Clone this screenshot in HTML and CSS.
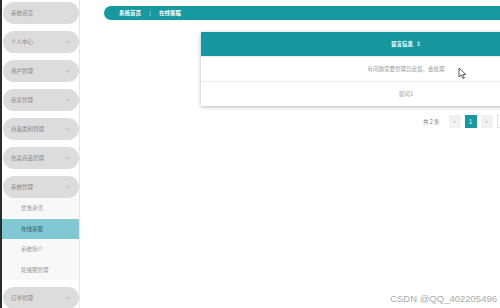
FILE: index.html
```html
<!DOCTYPE html>
<html lang="zh">
<head>
    <meta charset="UTF-8">
    <title>在线客服</title>
    <link rel="stylesheet" href="styles.css">
</head>
<body>
    <div class="pagina">
        <div class="menu">
            <div class="item">系统首页</div>
            <div class="item">个人中心<span class="seta"></span></div>
            <div class="item">用户管理<span class="seta"></span></div>
            <div class="item">商家管理<span class="seta"></span></div>
            <div class="item">商品类别管理<span class="seta"></span></div>
            <div class="item">热卖商品管理<span class="seta"></span></div>
            <div class="item aberto">系统管理<span class="seta cima"></span></div>
            <div class="submenu">
                <div class="subitem">优惠资讯</div>
                <div class="subitem ativo">在线客服</div>
                <div class="subitem">系统简介</div>
                <div class="subitem">轮播图管理</div>
            </div>
            <div class="item">订单管理<span class="seta"></span></div>
        </div>

        <div class="conteudo">
            <div class="trilha">
                <span>系统首页</span>
                <span class="sep">⋮</span>
                <span>在线客服</span>
            </div>

            <div class="tabela">
                <div class="cabecalho">留言信息 <span class="ordem">⇕</span></div>
                <div class="linha">有问题需要管理员反馈，会处理</div>
                <div class="linha">提问1</div>
            </div>

            <div class="paginacao">
                <span class="total">共 2 条</span>
                <span class="botao">&lt;</span>
                <span class="botao atual">1</span>
                <span class="botao">&gt;</span>
                <span class="campo"></span>
            </div>
        </div>
    </div>

    <svg class="cursor" width="9" height="13" viewBox="0 0 9 13">
        <path d="M1 1 L1 10 L3.3 8 L5 11.6 L6.4 11 L4.8 7.5 L7.8 7.4 Z" fill="#fff" stroke="#333" stroke-width="0.8"/>
    </svg>

    <div class="marca">CSDN @QQ_402205496</div>
</body>
</html>
```

FILE: styles.css
```css
body {
    margin: 0;
    font-family: "Noto Sans CJK SC", "Noto Sans", sans-serif;
    background: #fff;
    overflow: hidden;
}

.pagina {
    display: flex;
    height: 308px;
}

.menu {
    width: 76px;
    padding-left: 1px;
    border-left: 2px solid #2b2b2b;
    border-right: 1px solid #e6e6e6;
    padding-top: 2px;
    flex-shrink: 0;
}

.item {
    height: 22px;
    margin-bottom: 7px;
    background: #dcdcdc;
    border-radius: 11px;
    display: flex;
    align-items: center;
    padding: 0 8px;
    font-size: 5.5px;
    color: #888;
    position: relative;
}

.item.aberto {
    margin-bottom: 0;
}

.seta {
    position: absolute;
    right: 10px;
    top: 9px;
    width: 2px;
    height: 2px;
    border-right: 1px solid #c2c2c2;
    border-bottom: 1px solid #c2c2c2;
    transform: rotate(45deg);
}

.seta.cima {
    top: 10px;
    transform: rotate(-135deg);
}

.submenu {
    background: #f8f8f8;
    margin: 0 0 6.5px -1px;
}

.subitem {
    height: 20.5px;
    display: flex;
    align-items: center;
    padding-left: 19px;
    font-size: 5.5px;
    color: #999;
}

.subitem.ativo {
    background: #80c9d2;
    color: #3a5560;
}

.conteudo {
    flex: 1;
    padding-left: 24px;
    padding-top: 6px;
    overflow: hidden;
}

.trilha {
    height: 14px;
    width: 420px;
    background: #1799a1;
    border-radius: 7px 0 0 7px;
    display: flex;
    align-items: center;
    padding-left: 15px;
    color: #fff;
    font-size: 5.5px;
    font-weight: bold;
    gap: 4px;
}

.sep {
    font-weight: normal;
    margin: 0 2px;
}

.tabela {
    width: 410px;
    margin: 12px 0 0 97px;
    box-shadow: 0 1px 4px rgba(0, 0, 0, 0.3);
    background: #fff;
}

.cabecalho {
    height: 24px;
    background: #16979f;
    color: #fff;
    font-size: 5.5px;
    font-weight: bold;
    display: flex;
    align-items: center;
    justify-content: center;
}

.ordem {
    font-weight: normal;
    margin-left: 3px;
}

.linha {
    height: 24px;
    border-top: 1px solid #ececec;
    display: flex;
    align-items: center;
    justify-content: center;
    font-size: 5.5px;
    color: #999;
}

.paginacao {
    display: flex;
    align-items: center;
    gap: 4px;
    width: max-content;
    margin: 9px 0 0 319px;
    font-size: 5.5px;
    color: #777;
}

.total {
    margin-right: 5px;
    white-space: nowrap;
}

.botao {
    width: 12px;
    height: 13px;
    background: #f1f1f1;
    color: #c0c0c0;
    display: flex;
    align-items: center;
    justify-content: center;
    flex-shrink: 0;
}

.botao.atual {
    background: #1799a1;
    color: #fff;
}

.campo {
    width: 20px;
    height: 11px;
    border: 1px solid #e4e4e4;
    flex-shrink: 0;
}

.cursor {
    position: absolute;
    left: 458px;
    top: 67px;
}

.marca {
    position: absolute;
    right: 3px;
    bottom: 4px;
    font-family: "Liberation Sans", sans-serif;
    font-size: 9.5px;
    color: #aaa;
}
```
